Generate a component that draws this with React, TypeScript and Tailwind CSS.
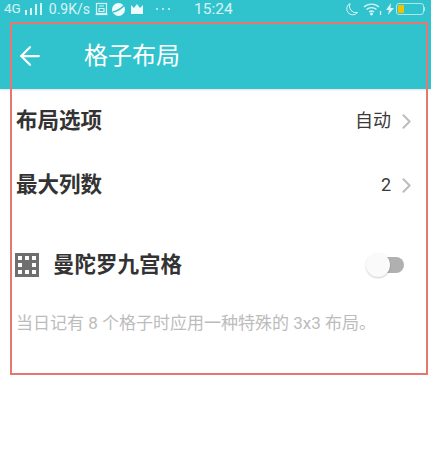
import { ArrowLeft, ChevronRight } from 'lucide-react';

function StatusBar() {
  return (
    <div className="relative flex h-[22px] items-center justify-between pb-[4px] pl-[4px] pr-[6px] text-white/80">
      <div className="flex items-center">
        <span className="text-[13.500px] leading-none">4G</span>
        {/* signal */}
        <svg width="19" height="14" viewBox="0 0 19 14" className="ml-[4px]" fill="currentColor">
          <rect x="0" y="8" width="2" height="5" />
          <rect x="5" y="6" width="2" height="7" />
          <rect x="10" y="2" width="2" height="11" />
          <rect x="15" y="1" width="2" height="12" />
        </svg>
        <span className="ml-[5px] text-[14px] leading-none">0.9K/s</span>
        {/* notification icons */}
        <svg width="14" height="14" viewBox="0 0 14 14" className="ml-[5px]" fill="none" stroke="currentColor" strokeWidth="1.2">
          <rect x="1.500" y="1.500" width="10" height="10" />
          <path d="M4 4h5M4 6.500h5v3H4z" />
          <path d="M0.500 12.500h12" />
        </svg>
        <svg width="15" height="15" viewBox="0 0 15 15" className="ml-[2px]">
          <circle cx="7.500" cy="7.500" r="6.500" fill="#f1fbfc" />
          <path d="M2 10 C6 9 10 7 13 3.500" stroke="#31c3cd" strokeWidth="1.400" fill="none" />
        </svg>
        <svg width="14" height="12" viewBox="0 0 14 12" className="ml-[4px]" fill="#eefafb">
          <path d="M1 2l3 3 3-4 3 4 3-3v9H1z" />
        </svg>
        <div className="ml-[12px] flex gap-[4px]">
          <div className="h-[2px] w-[2px] rounded-full bg-white/80" />
          <div className="h-[2px] w-[2px] rounded-full bg-white/80" />
          <div className="h-[2px] w-[2px] rounded-full bg-white/80" />
        </div>
      </div>
      <span className="absolute left-[194px] top-0 text-[15.500px] leading-[18px]">15:24</span>
      <div className="flex items-center">
        {/* moon */}
        <svg width="15" height="15" viewBox="0 0 15 15" fill="none" stroke="currentColor" strokeWidth="1">
          <path d="M6 1.500a6 6 0 1 0 7.500 9A6.500 6.500 0 0 1 6 1.500z" />
        </svg>
        {/* wifi */}
        <svg width="19" height="14" viewBox="0 0 19 14" className="ml-[4px]" fill="none" stroke="currentColor" strokeWidth="1.300">
          <path d="M1 5a11 11 0 0 1 15 0" />
          <path d="M3.500 7.500a7.500 7.500 0 0 1 10 0" />
          <path d="M6 10a4 4 0 0 1 5 0" />
          <circle cx="8.500" cy="12" r="0.800" fill="currentColor" />
          <path d="M17.500 9v4" />
        </svg>
        {/* charging */}
        <svg width="8" height="12" viewBox="0 0 8 12" className="ml-[4px]" fill="currentColor">
          <path d="M5 0L0 7h3l-1 5 6-7H4.500z" />
        </svg>
        {/* battery */}
        <div className="ml-[2px] flex h-[12px] w-[28px] items-center rounded-[3px] border border-white/60 p-[1px]">
          <div className="h-full w-[6px] rounded-[1px] bg-[#f2c200]" />
        </div>
        <div className="h-[4px] w-[1px] bg-white/60" />
      </div>
    </div>
  );
}

function Row({ title, value }: { title: string; value: string }) {
  return (
    <div className="flex h-[64px] items-center justify-between pl-[16px] pr-[12px]">
      <span className="text-[21.500px] font-bold leading-none text-[#333333]">{title}</span>
      <div className="flex items-center gap-[3px]">
        <span className="text-[18px] leading-none text-[#3a3a3a]">{value}</span>
        <ChevronRight size={25} strokeWidth={2} className="text-[#bdbdbd]" />
      </div>
    </div>
  );
}

function GridIcon() {
  return (
    <svg width="24" height="24" viewBox="0 0 24 24" fill="#6f6f6f">
      <path
        d="M0 0h24v24H0z M3 3v4h4V3z M10 3v4h4V3z M17 3v4h4V3z M3 10v4h4v-4z M17 10v4h4v-4z M3 17v4h4v-4z M10 17v4h4v-4z M17 17v4h4v-4z"
        fillRule="evenodd"
      />
    </svg>
  );
}

export default function App() {
  return (
    <div className="relative h-[463px] w-[431px] overflow-hidden bg-white font-['Roboto','Noto_Sans_CJK_SC',sans-serif]">
      <header className="bg-[#31c3cd] shadow-[0_1px_2px_rgba(0,0,0,0.12)]">
        <StatusBar />
        <div className="flex h-[67px] items-center pl-[15px] text-white">
          <ArrowLeft size={30} strokeWidth={1.800} />
          <h1 className="ml-[39px] text-[24px] font-normal leading-none">格子布局</h1>
        </div>
      </header>

      <div>
        <Row title="布局选项" value="自动" />
        <Row title="最大列数" value="2" />
      </div>

      <div className="mt-[32px] flex h-[32px] items-center justify-between pl-[15px] pr-[27px]">
        <div className="flex items-center gap-[14px]">
          <GridIcon />
          <span className="text-[21.500px] font-bold leading-none text-[#333333]">曼陀罗九宫格</span>
        </div>
        {/* toggle off */}
        <div className="relative h-[16px] w-[26px] rounded-full bg-[#b0b0b0]">
          <div className="absolute left-[-12px] top-[-4px] h-[24px] w-[24px] rounded-full bg-[#fafafa] shadow-[0_1px_2px_rgba(0,0,0,0.2)]" />
        </div>
      </div>

      <p className="mt-[32px] pl-[16px] text-[17px] leading-[20px] text-[#bcbcbc]">
        当日记有 8 个格子时应用一种特殊的 3x3 布局。
      </p>

      {/* annotation box drawn over the screenshot */}
      <div className="pointer-events-none absolute left-[10px] top-[22px] h-[353px] w-[418px] border-2 border-[#e4786e]" />
    </div>
  );
}
